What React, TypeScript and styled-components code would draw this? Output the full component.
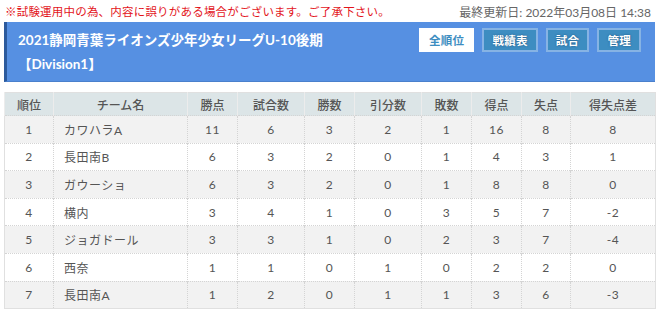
import React, { FC } from 'react';
import styled, { createGlobalStyle } from 'styled-components';

const FONT = `Lato, "Noto Sans CJK JP", sans-serif`;

const GlobalStyle = createGlobalStyle`
  body {
    margin: 0;
    font-family: ${FONT};
    background: #fff;
  }
`;

const Page = styled.div`
  padding: 0 5px 0 4px;
`;

const Notice = styled.div`
  display: flex;
  justify-content: space-between;
  align-items: center;
  height: 22px;
  padding: 0 4px 0 1px;
  font-size: 12px;
`;

const Warning = styled.span`
  color: #e3141b;
  font-size: 11.5px;
  letter-spacing: 0.2px;
`;

const Updated = styled.span`
  color: #666;
`;

const Panel = styled.div`
  display: flex;
  justify-content: space-between;
  height: 60px;
  box-sizing: border-box;
  background: #5690e2;
  border-left: 3px solid #2c5a9c;
  border-bottom: 1px solid #4a80cc;
  padding: 6px 14px 0 11px;
`;

const TitleBlock = styled.div`
  display: flex;
  flex-direction: column;
  color: #fff;
  font-weight: 700;
  font-size: 13.5px;
`;

const Title = styled.div`
  height: 24px;
  line-height: 24px;
`;

const Division = styled.div`
  height: 24px;
  line-height: 24px;
`;

const Buttons = styled.div`
  display: flex;
  gap: 8px;
  align-items: flex-start;
`;

const NavButton = styled.div<{ $active?: boolean }>`
  height: 24px;
  box-sizing: border-box;
  padding: 0 8px;
  display: flex;
  align-items: center;
  font-size: 11.5px;
  font-weight: 700;
  letter-spacing: 0.3px;
  border: 2px solid ${({ $active }) => ($active ? '#fff' : '#86b3e4')};
  background: ${({ $active }) => ($active ? '#fff' : '#3d8dc1')};
  color: ${({ $active }) => ($active ? '#3d8dc1' : '#fff')};
  text-shadow: ${({ $active }) => ($active ? 'none' : '0 0 2px #1c4f7a')};
`;

const Table = styled.table`
  margin-top: 10px;
  width: 651px;
  border-collapse: collapse;
  table-layout: fixed;
  font-size: 12px;
  color: #555;
  border: 1px solid #e0e0e0;
`;

const Th = styled.th`
  background: #dce5e7;
  height: 22px;
  padding: 0;
  font-weight: 500;
  border-left: 1px solid #ececec;
`;

const Row = styled.tr<{ $odd: boolean }>`
  background: ${({ $odd }) => ($odd ? '#f2f2f2' : '#fff')};
`;

const Td = styled.td<{ $left?: boolean }>`
  height: 27.6px;
  box-sizing: border-box;
  padding: 0 ${({ $left }) => ($left ? '10px' : '0')};
  text-align: ${({ $left }) => ($left ? 'left' : 'center')};
  border-top: 1px dotted #d4d4d4;
  border-left: 1px dotted #d4d4d4;
  letter-spacing: 0.5px;
`;

const COLS = [
  { label: '順位', w: 49 },
  { label: 'チーム名', w: 134 },
  { label: '勝点', w: 50 },
  { label: '試合数', w: 67 },
  { label: '勝数', w: 50 },
  { label: '引分数', w: 67 },
  { label: '敗数', w: 50 },
  { label: '得点', w: 50 },
  { label: '失点', w: 49 },
  { label: '得失点差', w: 85 },
];

const ROWS: Array<Array<string | number>> = [
  [1, 'カワハラA', 11, 6, 3, 2, 1, 16, 8, 8],
  [2, '長田南B', 6, 3, 2, 0, 1, 4, 3, 1],
  [3, 'ガウーショ', 6, 3, 2, 0, 1, 8, 8, 0],
  [4, '横内', 3, 4, 1, 0, 3, 5, 7, -2],
  [5, 'ジョガドール', 3, 3, 1, 0, 2, 3, 7, -4],
  [6, '西奈', 1, 1, 0, 1, 0, 2, 2, 0],
  [7, '長田南A', 1, 2, 0, 1, 1, 3, 6, -3],
];

const NAV = ['全順位', '戦績表', '試合', '管理'];

const App: FC = () => (
  <Page>
    <GlobalStyle />
    <Notice>
      <Warning>※試験運用中の為、内容に誤りがある場合がございます。ご了承下さい。</Warning>
      <Updated>最終更新日: 2022年03月08日 14:38</Updated>
    </Notice>
    <Panel>
      <TitleBlock>
        <Title>2021静岡青葉ライオンズ少年少女リーグU-10後期</Title>
        <Division>【Division1】</Division>
      </TitleBlock>
      <Buttons>
        {NAV.map((n, i) => (
          <NavButton key={n} $active={i === 0}>{n}</NavButton>
        ))}
      </Buttons>
    </Panel>
    <Table>
      <colgroup>
        {COLS.map((c) => <col key={c.label} style={{ width: c.w }} />)}
      </colgroup>
      <thead>
        <tr>
          {COLS.map((c) => <Th key={c.label}>{c.label}</Th>)}
        </tr>
      </thead>
      <tbody>
        {ROWS.map((r, idx) => (
          <Row key={idx} $odd={idx % 2 === 0}>
            {r.map((v, ci) => <Td key={ci} $left={ci === 1}>{v}</Td>)}
          </Row>
        ))}
      </tbody>
    </Table>
  </Page>
);

export default App;
